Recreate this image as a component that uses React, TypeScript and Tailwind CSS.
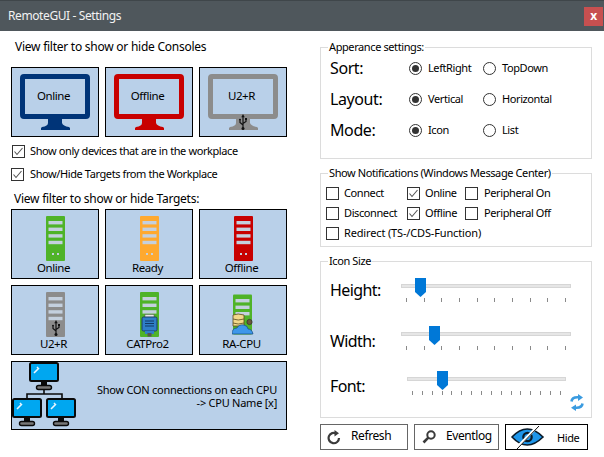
import type { ReactNode } from "react";

const BLUE = "#003478";
const RED = "#c80000";
const GRAY = "#8c8c8c";
const GREEN = "#4fb328";
const ORANGE = "#ffa92f";

function UsbGlyph({ x, y }: { x: number; y: number }) {
  return (
    <g transform={`translate(${x} ${y})`} stroke="#111" fill="none" strokeWidth="1.2">
      <path d="M5 2v12M5 11 2 8.5V6.5M5 9.5 8 7.5V5.5" />
      <path d="M3.3 3.2 5 0l1.7 3.2z" fill="#111" stroke="none" />
      <circle cx="5" cy="14.4" r="1.5" fill="#111" stroke="none" />
      <circle cx="2" cy="5.8" r="1" fill="#111" stroke="none" />
      <rect x="7" y="4" width="2" height="2" fill="#111" stroke="none" />
    </g>
  );
}

function Monitor({ color, usb }: { color: string; usb?: boolean }) {
  return (
    <svg width="70" height="56" viewBox="0 0 70 56">
      <path
        d="M4 0h62a4 4 0 0 1 4 4v37a4 4 0 0 1-4 4H4a4 4 0 0 1-4-4V4a4 4 0 0 1 4-4zM5 5v35h60V5z"
        fill={color}
        fillRule="evenodd"
      />
      <path d="M28 45h14v4q1 3 7 4l1 1v2H21v-2l1-1q6-1 6-4z" fill={color} />
      {usb && <UsbGlyph x={30} y={40} />}
    </svg>
  );
}

function Server({ color, usb, dots = true }: { color: string; usb?: boolean; dots?: boolean }) {
  return (
    <svg width="19" height="45" viewBox="0 0 19 45">
      <rect width="19" height="45" rx="1" fill={color} />
      <rect x="2.5" y="5" width="14" height="3.4" fill="#c4d0de" />
      <rect x="2.5" y="11.6" width="14" height="3.4" fill="#c4d0de" />
      <rect x="2.5" y="18.2" width="14" height="3.4" fill="#c4d0de" />
      <rect x="2.5" y="24.8" width="14" height="3.4" fill="#c4d0de" />
      {dots && <rect x="6" y="37" width="2" height="2" fill="#c4d0de" />}
      {dots && <rect x="11" y="37" width="2" height="2" fill="#c4d0de" />}
      {usb && <UsbGlyph x={5} y={28} />}
    </svg>
  );
}

function CatIcon() {
  return (
    <svg width="19" height="45" viewBox="0 0 19 45">
      <rect width="19" height="45" rx="1" fill={GREEN} />
      <rect x="2.5" y="5" width="14" height="3.4" fill="#c4d0de" />
      <rect x="2.5" y="11.6" width="14" height="3.4" fill="#c4d0de" />
      <rect x="2.5" y="18.2" width="14" height="3.4" fill="#c4d0de" />
      <rect x="5" y="22.5" width="9" height="3" fill="#e8e8e8" stroke="#555" strokeWidth="0.5" />
      <rect x="2" y="25" width="15" height="14" rx="1.5" fill="#2f7fc8" stroke="#1d3f66" />
      <path d="M5 29h9M5 31.5h9M5 34h9" stroke="#123a66" strokeWidth="1" />
      <rect x="5" y="39" width="9" height="3" fill="#2f7fc8" />
      <rect x="7.5" y="41" width="4" height="3.5" fill="#555" />
    </svg>
  );
}

function RaCpuIcon() {
  return (
    <svg width="22" height="45" viewBox="0 0 22 45">
      <rect x="1" y="2.5" width="19" height="40" rx="1" fill={GREEN} />
      <rect x="3.5" y="7" width="14" height="3.4" fill="#c4d0de" />
      <rect x="3.5" y="13.6" width="14" height="3.4" fill="#c4d0de" />
      <rect x="3.5" y="20" width="14" height="3.4" fill="#c4d0de" />
      <path d="M1 23q5-2 11 0v11H1z" fill="#f2d98a" stroke="#5b4a1c" strokeWidth="0.8" />
      <path d="M1 27q5 2 11 0M1 31q5 2 11 0" stroke="#5b4a1c" strokeWidth="0.8" fill="none" />
      <circle cx="17.5" cy="30" r="2.6" fill="#6b5a3c" stroke="#333" strokeWidth="0.8" />
      <path d="M0 42q0-6 5-6 2-4 7-3 4 1 4 4 4 0 5 5z" fill="#3d97ea" stroke="#174a80" strokeWidth="0.7" />
    </svg>
  );
}

function Pc({ x, y }: { x: number; y: number }) {
  return (
    <g transform={`translate(${x} ${y})`}>
      <rect x="1" y="1" width="28" height="18" rx="1.5" fill="#00a7f0" stroke="#0a0a0a" strokeWidth="2" />
      <path d="M5 11l5-5M8 6l1-1" stroke="#e8f6ff" strokeWidth="1.6" />
      <rect x="12" y="20" width="6" height="4" fill="#0a0a0a" />
      <rect x="7.5" y="23.5" width="15" height="4" rx="2" fill="#777" stroke="#0a0a0a" strokeWidth="1.4" />
    </g>
  );
}

function NetworkIcon() {
  return (
    <svg width="66" height="68" viewBox="1 1 66 68" className="shrink-0">
      <path d="M16 37v-4h35v4M33 29v4" fill="none" stroke="#0a0a0a" strokeWidth="1.6" />
      <Pc x={18} y={1} />
      <Pc x={1} y={37} />
      <Pc x={35} y={37} />
    </svg>
  );
}

function ConsoleTile({ label, color, usb }: { label: string; color: string; usb?: boolean }) {
  return (
    <button className="grid h-[70px] w-[88px] place-items-center border border-black bg-[#b9d0e9] text-black">
      <span className="col-start-1 row-start-1">
        <Monitor color={color} usb={usb} />
      </span>
      <span className="col-start-1 row-start-1 mb-[13px] mr-[3px] text-[11.5px] leading-[16px]">{label}</span>
    </button>
  );
}

function TargetTile({ label, icon }: { label: string; icon: ReactNode }) {
  return (
    <button className="flex h-[70px] w-[88px] flex-col items-center border border-black bg-[#b9d0e9] pt-[6px] text-black">
      <span className="flex h-[45px] items-start">{icon}</span>
      <span className="mr-[3px] mt-[-1px] text-[11.5px] leading-[16px]">{label}</span>
    </button>
  );
}

function Check({ checked, className = "" }: { checked?: boolean; className?: string }) {
  return (
    <span className={`flex h-[13px] w-[13px] shrink-0 items-center justify-center border border-[#333] bg-white ${className}`}>
      {checked && (
        <svg width="11" height="11" viewBox="0 0 11 11">
          <path d="M1.5 5.5 4 8.5 9.5 2" fill="none" stroke="#555" strokeWidth="1.1" />
        </svg>
      )}
    </span>
  );
}

function Notify({ label, checked, className = "" }: { label: string; checked?: boolean; className?: string }) {
  return (
    <label className={`flex h-[20px] items-center gap-[5px] ${className}`}>
      <Check checked={checked} />
      <span className="whitespace-nowrap">{label}</span>
    </label>
  );
}

function Radio({ label, checked }: { label: string; checked?: boolean }) {
  return (
    <label className="flex w-[74px] items-center gap-[6px]">
      <span className="flex h-[13px] w-[13px] shrink-0 items-center justify-center rounded-full border border-[#333] bg-white">
        {checked && <span className="h-[7px] w-[7px] rounded-full bg-[#333]" />}
      </span>
      <span>{label}</span>
    </label>
  );
}

function RadioRow({ title, first, second }: { title: string; first: string; second: string }) {
  return (
    <div className="flex h-[26px] items-center pl-[9px]">
      <span className="w-[79px] text-[16px] tracking-[-0.4px]">{title}</span>
      <Radio label={first} checked />
      <Radio label={second} />
    </div>
  );
}

function Slider({ className, ticks, thumb }: { className: string; ticks: number; thumb: string }) {
  return (
    <div className={`relative h-[25px] ${className}`}>
      <div className="mt-[6px] h-[4px] border border-[#d6d6d6] bg-[#e6e6e6]" />
      <svg width="11" height="19" viewBox="0 0 11 19" className={`absolute top-0 ${thumb}`}>
        <path d="M0 0h11v14l-5.5 5L0 14z" fill="#0078d7" />
      </svg>
      <div className="mt-[10px] flex justify-between px-[5px]">
        {Array.from({ length: ticks }).map((_, i) => (
          <span key={i} className="h-[4px] w-px bg-[#8a8a8a]" />
        ))}
      </div>
    </div>
  );
}

function SyncIcon() {
  return (
    <svg width="14" height="17" viewBox="0 0 14 17">
      <path d="M1.5 7.5Q2 3 8 3.2" fill="none" stroke="#3a9be0" strokeWidth="2.6" />
      <path d="M8 0l5 3.5L8 7z" fill="#3a9be0" />
      <path d="M12.5 9.5Q12 14 6 13.8" fill="none" stroke="#3a9be0" strokeWidth="2.6" />
      <path d="M6 10.5 1 13.8 6 17z" fill="#3a9be0" />
    </svg>
  );
}

function HideIcon() {
  return (
    <svg width="33" height="24" viewBox="0 0 33 24">
      <path d="M1 12Q16-4 32 12 16 28 1 12z" fill="#1e96ea" stroke="#0a1a28" strokeWidth="1.6" />
      <circle cx="16.5" cy="12" r="4.2" fill="#1e96ea" stroke="#0a1a28" strokeWidth="2.2" />
      <path d="M4.5 24 27 1" stroke="#fff" strokeWidth="2.6" />
      <path d="M6 24 28 1" stroke="#111" strokeWidth="1" />
    </svg>
  );
}

function RefreshIcon() {
  return (
    <svg width="14" height="15" viewBox="0 0 14 15">
      <path d="M9.5 3.6A5.2 5.2 0 1 0 12 8" fill="none" stroke="#3a3a3a" strokeWidth="2.2" />
      <path d="M7.5 0v6.5l4.5-3.2z" fill="#3a3a3a" />
    </svg>
  );
}

function SearchIcon() {
  return (
    <svg width="14" height="14" viewBox="0 0 14 14">
      <circle cx="9" cy="5" r="3.7" fill="none" stroke="#3a3a3a" strokeWidth="2" />
      <path d="M6.3 7.7 1.5 12.5" stroke="#3a3a3a" strokeWidth="2.6" />
    </svg>
  );
}

export default function App() {
  return (
    <div className="flex h-[457px] w-[604px] flex-col overflow-hidden bg-white font-['Noto_Sans',sans-serif] text-[11px] tracking-[-0.4px] text-black">
      <div className="flex h-[31px] shrink-0 items-center justify-between border-t border-[#3f464a] bg-[#4f575c] pl-[8px] pr-[1px] text-[12px] text-[#f2f2f2]">
        <span>RemoteGUI - Settings</span>
        <button className="flex h-[19px] w-[19px] items-center justify-center bg-[#c75050] font-bold leading-none text-white">x</button>
      </div>

      <div className="flex flex-1">
        <div className="w-[320px] pl-[11px]">
          <div className="ml-[4px] mt-[8px] text-[12px] leading-[16px] tracking-[-0.25px]">View filter to show or hide Consoles</div>
          <div className="mt-[12px] flex gap-[6px]">
            <ConsoleTile label="Online" color={BLUE} />
            <ConsoleTile label="Offline" color={RED} />
            <ConsoleTile label="U2+R" color={GRAY} usb />
          </div>
          <label className="ml-[1px] mt-[7px] flex h-[14px] items-center gap-[5px]">
            <Check checked />
            <span>Show only devices that are in the workplace</span>
          </label>
          <label className="mt-[9px] flex h-[14px] items-center gap-[6px]">
            <Check checked />
            <span>Show/Hide Targets from the Workplace</span>
          </label>
          <div className="ml-[3px] mt-[10px] text-[12px] leading-[16px] tracking-[-0.25px]">View filter to show or hide Targets:</div>
          <div className="mt-[2px] grid w-[276px] grid-cols-3 gap-[6px]">
            <TargetTile label="Online" icon={<Server color={GREEN} />} />
            <TargetTile label="Ready" icon={<Server color={ORANGE} />} />
            <TargetTile label="Offline" icon={<Server color={RED} />} />
            <TargetTile label="U2+R" icon={<Server color={GRAY} usb dots={false} />} />
            <TargetTile label="CATPro2" icon={<CatIcon />} />
            <TargetTile label="RA-CPU" icon={<RaCpuIcon />} />
            <button className="col-span-3 flex h-[69px] items-center justify-between border border-black bg-[#b9d0e9] pr-[9px]">
              <NetworkIcon />
              <span className="text-right leading-[13px] tracking-[-0.25px]">
                Show CON connections on each CPU
                <br />
                -&gt; CPU Name [x]
              </span>
            </button>
          </div>
        </div>

        <div className="w-[272px]">
          <fieldset className="mt-[8px] h-[120px] border border-[#dcdcdc]">
            <legend className="ml-[7px] px-[1px] leading-[16px]">Apperance settings:</legend>
            <div className="flex flex-col gap-[5px]">
              <RadioRow title="Sort:" first="LeftRight" second="TopDown" />
              <RadioRow title="Layout:" first="Vertical" second="Horizontal" />
              <RadioRow title="Mode:" first="Icon" second="List" />
            </div>
          </fieldset>

          <fieldset className="mt-[6px] h-[82px] border border-[#dcdcdc]">
            <legend className="ml-[7px] px-[1px] leading-[16px]">Show Notifications (Windows Message Center)</legend>
            <div className="mt-[2px] grid grid-cols-[81px_58px_1fr] pl-[5px]">
              <Notify label="Connect" />
              <Notify label="Online" checked />
              <Notify label="Peripheral On" className="gap-[6px]" />
              <Notify label="Disconnect" />
              <Notify label="Offline" checked />
              <Notify label="Peripheral Off" className="gap-[6px]" />
              <Notify label="Redirect (TS-/CDS-Function)" className="col-span-3 tracking-[-0.15px]" />
            </div>
          </fieldset>

          <fieldset className="mt-[6px] h-[165px] border border-[#dcdcdc]">
            <legend className="ml-[7px] px-[1px] leading-[16px]">Icon Size</legend>
            <div className="mt-[9px] flex h-[25px] pl-[9px]">
              <span className="w-[71px] text-[16px] leading-[25px] tracking-[-0.6px]">Height:</span>
              <Slider className="w-[170px]" ticks={10} thumb="left-[14px]" />
            </div>
            <div className="mt-[23px] flex h-[25px] pl-[9px]">
              <span className="mt-[3px] w-[71px] text-[16px] leading-[25px] tracking-[-0.6px]">Width:</span>
              <Slider className="w-[170px]" ticks={10} thumb="left-[28px]" />
            </div>
            <div className="mt-[20px] flex h-[25px] pl-[9px]">
              <span className="mt-[3px] w-[77px] text-[16px] leading-[25px] tracking-[-0.6px]">Font:</span>
              <Slider className="w-[159px]" ticks={16} thumb="left-[30px]" />
            </div>
            <div className="mt-[-2px] flex justify-end pr-[7px]">
              <SyncIcon />
            </div>
          </fieldset>

          <div className="mt-[6px] flex gap-[6px]">
            <button className="flex h-[26px] w-[88px] items-center border border-[#666] pl-[6px]">
              <RefreshIcon />
              <span className="ml-[10px] mb-[3px] text-[12px]">Refresh</span>
            </button>
            <button className="flex h-[26px] w-[85px] items-center border border-[#666] pl-[7px]">
              <SearchIcon />
              <span className="ml-[10px] mb-[3px] text-[12px]">Eventlog</span>
            </button>
            <button className="flex h-[26px] w-[83px] items-center border border-black pl-[5px]">
              <HideIcon />
              <span className="ml-[13px] mt-[2px]">Hide</span>
            </button>
          </div>
        </div>
      </div>
    </div>
  );
}
